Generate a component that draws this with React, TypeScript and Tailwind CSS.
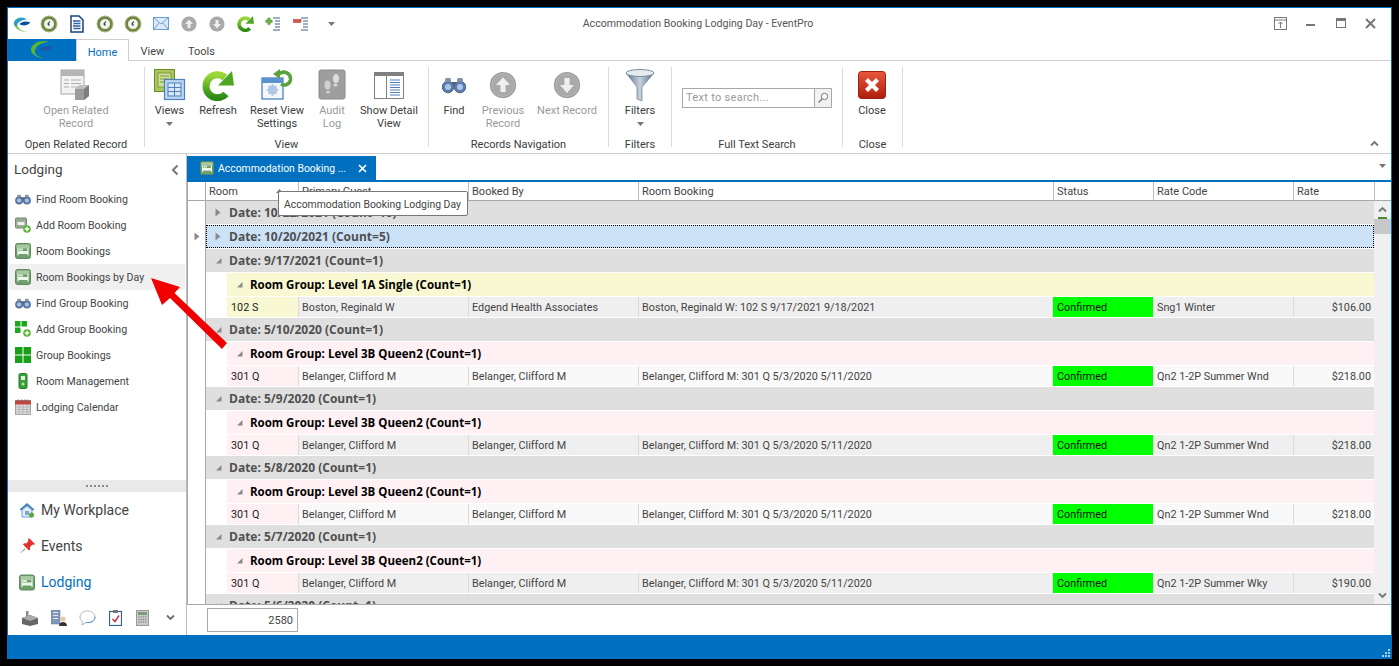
import React from "react";

const Logo = ({ s = 20 }: { s?: number }) => (
  <svg width={s} height={s} viewBox="0 0 20 20">
    <path d="M15 5.500C11 2 4 3 2 8c-1 4 3 7 6 7.500-3-2-3.500-5-1.500-7C9 6.500 12 5.500 15 5.500z" fill="#2f9fc6" />
    <path d="M2.500 11c1 4 7 7.500 13 6.500-4 0-8-1.500-9.500-4.500z" fill="#7cc243" />
    <path d="M7.500 10c2-2.500 6-3.500 11-1.500-3 3-8 4-11 1.500z" fill="#0d4f9e" />
  </svg>
);
const LogoTab = () => (
  <svg width="24" height="20" viewBox="0 0 24 20">
    <path d="M19 2C12-1 2 3 1 9c-.5 5 6 9 13 9.500-6-1.500-10-4-9-8.500C6 5.500 12 2.500 19 2z" fill="#5cb531" />
    <path d="M9 9.500c3-3 9-4 14-2.500-3 4-10 6-14 2.500z" fill="#1a5aa8" />
  </svg>
);
const Clock = () => (
  <svg width="18" height="18" viewBox="0 0 18 18">
    <circle cx="9" cy="9" r="8" fill="#6e8a3a" />
    <circle cx="9" cy="9" r="8" fill="none" stroke="#a9b98a" strokeWidth="1" />
    <circle cx="9" cy="9" r="5.500" fill="#f4f4ee" stroke="#4d6428" strokeWidth="0.7" />
    <path d="M9.800 6.500 8 9l1.500 1.500" fill="none" stroke="#333" strokeWidth="1.200" />
  </svg>
);
const Doc = () => (
  <svg width="16" height="18" viewBox="0 0 16 18">
    <path d="M2 1h8l4 4v12H2z" fill="#fff" stroke="#14437f" strokeWidth="1.500" />
    <path d="M4.500 6h7M4.500 8.500h7M4.500 11h7M4.500 13.500h7" stroke="#2a62ad" strokeWidth="1.300" />
    <path d="M4 6h1.500M4 11h1.500" stroke="#c23a2a" strokeWidth="1.300" />
  </svg>
);
const Mail = () => (
  <svg width="16" height="13" viewBox="0 0 16 13">
    <rect x="0.500" y="0.500" width="15" height="12" fill="#dbe9f8" stroke="#6d9ed3" />
    <path d="M1 1l7 6 7-6M1 12l5-6M15 12l-5-6" fill="none" stroke="#6d9ed3" />
  </svg>
);
const GrayArrow = ({ up, s = 16 }: { up?: boolean; s?: number }) => (
  <svg width={s} height={s} viewBox="0 0 16 16">
    <circle cx="8" cy="8" r="7.500" fill="#9b9b9b" />
    <circle cx="8" cy="8" r="6.500" fill="#a9a9a9" stroke="#bdbdbd" strokeWidth="0.500" />
    <path d={up ? "M8 3.500 12 8H9.500v4h-3V8H4z" : "M8 12.500 12 8H9.500V4h-3v4H4z"} fill="#eee" />
  </svg>
);
const Refresh = ({ s = 32 }: { s?: number }) => (
  <svg width={s} height={s} viewBox="0 0 32 32">
    <defs>
      <linearGradient id="gr" x1="0" y1="0" x2="0" y2="1">
        <stop offset="0" stopColor="#9bd93a" />
        <stop offset="1" stopColor="#2a8a14" />
      </linearGradient>
    </defs>
    <path d="M23 8.500A11.500 11.500 0 1 0 24 25" fill="none" stroke="url(#gr)" strokeWidth="7" />
    <path d="M16 16.500h16L30 2z" fill="#4ea720" />
  </svg>
);
const OutlinePM = ({ plus }: { plus?: boolean }) => (
  <svg width="16" height="16" viewBox="0 0 16 16">
    <path d="M8 2h7M10 5h5M10 8h5M10 11h5M8 14h7" stroke="#3c5f87" strokeWidth="1.200" />
    {plus ? (
      <path d="M1 5h2.500V2.500h3V5H9v3H6.500v2.500h-3V8H1z" fill="#72b23c" stroke="#3c7a1e" strokeWidth="0.500" transform="scale(0.8)" />
    ) : (
      <rect x="0.500" y="3.500" width="7.500" height="3" fill="#d9534f" stroke="#a33" strokeWidth="0.500" />
    )}
  </svg>
);
const OpenRelated = () => (
  <svg width="32" height="32" viewBox="0 0 32 32">
    <rect x="1" y="1" width="23" height="24" fill="#f3f3f3" stroke="#a5a5a5" />
    <rect x="1" y="1" width="23" height="6" fill="#b5b5b5" />
    <path d="M4 11h5M4 14.500h5M4 18h5M11 11h10M11 14.500h10M11 18h10" stroke="#b0b0b0" />
    <path d="M15 20l5-4h9v11l-5 4h-9z" fill="#9b9b9b" />
    <path d="M15 20l5-4h9l-5 4z" fill="#c0c0c0" />
    <path d="M24 20l5-4v11l-5 4z" fill="#7e7e7e" />
  </svg>
);
const Views = () => (
  <svg width="32" height="32" viewBox="0 0 32 32">
    <rect x="0.500" y="0.500" width="20" height="22" fill="#a9c75f" stroke="#6b8a26" />
    <rect x="4" y="4" width="13" height="14" fill="#cfe09e" stroke="#7d9a3a" />
    <path d="M6 7h9M6 10h9M6 13h9" stroke="#7d9a3a" />
    <rect x="10.500" y="10.500" width="20" height="20" fill="#bcd6f2" stroke="#4f81bd" strokeWidth="1.200" />
    <rect x="14" y="14" width="13" height="13" fill="#d8e8f8" stroke="#4f81bd" />
    <path d="M14 18.500h13M14 22.500h13M20.500 14v13" stroke="#4f81bd" />
  </svg>
);
const ResetView = () => (
  <svg width="32" height="32" viewBox="0 0 32 32">
    <rect x="1" y="9" width="21" height="21" fill="#f4f8fd" stroke="#3f78bd" strokeWidth="1.200" />
    <rect x="1" y="9" width="21" height="5" fill="#5a93d2" />
    <circle cx="11.500" cy="21" r="3.500" fill="none" stroke="#aec6e4" strokeWidth="2.500" />
    <path d="M11.500 15v12M5.500 21h12M7.500 17l8 8M15.500 17l-8 8" stroke="#aec6e4" strokeWidth="1.500" />
    <path d="M18 5C23 1 30 4 29.500 10.500 29 15 24 17.500 20 15" fill="none" stroke="#5aa23a" strokeWidth="3.500" />
    <path d="M19 0l-7 5 7 5z" fill="#5aa23a" />
  </svg>
);
const AuditLog = () => (
  <svg width="28" height="32" viewBox="0 0 28 32">
    <rect x="1" y="1" width="26" height="29" rx="2" fill="#9e9e9e" stroke="#8a8a8a" />
    <ellipse cx="18" cy="9.500" rx="3" ry="4.500" fill="#dcdcdc" />
    <ellipse cx="17.500" cy="16" rx="2" ry="1.500" fill="#dcdcdc" />
    <ellipse cx="9.500" cy="16" rx="3" ry="4.500" fill="#d0d0d0" />
    <ellipse cx="10" cy="23" rx="2" ry="1.500" fill="#d0d0d0" />
  </svg>
);
const ShowDetail = () => (
  <svg width="30" height="27" viewBox="0 0 30 27">
    <rect x="0.500" y="0.500" width="29" height="26" fill="#fff" stroke="#808080" />
    <rect x="0" y="0" width="30" height="4" fill="#808080" />
    <path d="M12.500 4v23" stroke="#808080" />
    <path d="M16 8h10M16 10.500h10M16 13h10M16 15.500h10M16 18h10M16 20.500h10M16 23h10" stroke="#4e7fb8" />
  </svg>
);
const Binoc = ({ s = 24 }: { s?: number }) => (
  <svg width={s} height={Math.round(s * 0.7)} viewBox="0 0 24 17">
    <rect x="8" y="5" width="8" height="5" fill="#56606e" />
    <circle cx="6" cy="10" r="5.800" fill="#5a7cb0" stroke="#55657c" />
    <circle cx="18" cy="10" r="5.800" fill="#5a7cb0" stroke="#55657c" />
    <circle cx="6" cy="10" r="3" fill="#a9c6ea" />
    <circle cx="18" cy="10" r="3" fill="#a9c6ea" />
    <rect x="3" y="1" width="6" height="4" rx="1.500" fill="#8292a6" />
    <rect x="15" y="1" width="6" height="4" rx="1.500" fill="#8292a6" />
  </svg>
);
const Funnel = () => (
  <svg width="30" height="32" viewBox="0 0 30 32">
    <defs>
      <linearGradient id="fn" x1="0" y1="0" x2="1" y2="0">
        <stop offset="0" stopColor="#5d7388" />
        <stop offset="0.500" stopColor="#c6d2dc" />
        <stop offset="1" stopColor="#566a7e" />
      </linearGradient>
    </defs>
    <path d="M1 4 12 18v12l5 2V18L29 4z" fill="url(#fn)" stroke="#5c6d7e" strokeWidth="0.600" />
    <ellipse cx="15" cy="4" rx="14" ry="3.500" fill="#e6ebef" stroke="#7d8d9c" />
  </svg>
);
const CloseBig = () => (
  <svg width="28" height="28" viewBox="0 0 28 28">
    <defs>
      <linearGradient id="cl" x1="0" y1="0" x2="0" y2="1">
        <stop offset="0" stopColor="#e8573a" />
        <stop offset="1" stopColor="#b01c0c" />
      </linearGradient>
    </defs>
    <rect x="0.500" y="0.500" width="27" height="27" rx="3" fill="url(#cl)" stroke="#9a2010" />
    <path d="M7 10l3-3 4 4 4-4 3 3-4 4 4 4-3 3-4-4-4 4-3-3 4-4z" fill="#fff" />
  </svg>
);
const Bed = ({ s = 16 }: { s?: number }) => (
  <svg width={s} height={s} viewBox="0 0 16 16">
    <rect x="0.500" y="0.500" width="15" height="15" rx="2" fill="#6ea06c" stroke="#5c8a5c" />
    <rect x="1.500" y="1.500" width="13" height="4" rx="1" fill="#a8c8a4" />
    <path d="M3 5v7.500M13 5v7.500" stroke="#eef5ec" strokeWidth="1.200" />
    <rect x="3" y="8" width="10" height="3" fill="#eef5ec" />
    <rect x="4" y="5.500" width="4" height="2" fill="#d8e8d4" />
  </svg>
);
const AddRoom = () => (
  <svg width="16" height="16" viewBox="0 0 16 16">
    <rect x="0.500" y="1" width="11" height="10" rx="1" fill="#98ac98" stroke="#6f8a70" />
    <rect x="2.500" y="5" width="7" height="3" fill="#eef3ee" />
    <circle cx="12" cy="12" r="3.800" fill="#5bb534" />
    <path d="M12 9.800v4.400M9.800 12h4.400" stroke="#fff" strokeWidth="1.300" />
  </svg>
);
const AddGroup = () => (
  <svg width="16" height="16" viewBox="0 0 16 16">
    <path d="M0 0h5.500v5.500H0zM6.500 0H12v5.500H6.500zM0 6.500h5.500V12H0z" fill="#1ca81c" />
    <circle cx="12" cy="12" r="3.800" fill="#5bb534" />
    <path d="M12 9.800v4.400M9.800 12h4.400" stroke="#fff" strokeWidth="1.300" />
  </svg>
);
const GroupBk = () => (
  <svg width="16" height="16" viewBox="0 0 16 16">
    <path d="M0 0h7.500v7.500H0zM8.500 0H16v7.500H8.500zM0 8.500h7.500V16H0zM8.500 8.500H16V16H8.500z" fill="#18a018" />
  </svg>
);
const RoomMgmt = () => (
  <svg width="16" height="16" viewBox="0 0 16 16">
    <rect x="4" y="0.500" width="8" height="15" rx="1.500" fill="#3aa03a" stroke="#227a22" />
    <rect x="6" y="3" width="4" height="4" fill="#e4f4e0" />
    <circle cx="8" cy="11" r="1.500" fill="#b8e4a8" />
  </svg>
);
const Calendar = () => (
  <svg width="16" height="16" viewBox="0 0 16 16">
    <rect x="0.500" y="1.500" width="15" height="14" fill="#ddd" stroke="#a5a5a5" />
    <rect x="0" y="1.500" width="16" height="4" fill="#c2453c" />
    <path d="M3 0.500v2M6.500 0.500v2M10 0.500v2M13 0.500v2" stroke="#666" />
    <path d="M1 8h14M1 10.500h14M1 13h14M4 6v9M8 6v9M12 6v9" stroke="#aaa" strokeWidth="0.700" />
  </svg>
);
const Home = () => (
  <svg width="16" height="16" viewBox="0 0 16 16">
    <path d="M8 1 .5 7.500l1.500 1L8 3.500l6 5 1.500-1z" fill="#3f7fb8" />
    <path d="M3 8v7h10V8L8 4z" fill="#e4eef8" stroke="#4e86bd" strokeWidth="0.800" />
    <rect x="6" y="9" width="4" height="4" fill="#7aa6d2" />
    <circle cx="12.500" cy="13" r="2.500" fill="#56a838" />
  </svg>
);
const Pin = () => (
  <svg width="16" height="16" viewBox="0 0 16 16">
    <path d="M9 1l6 6-1.500 1-1-.5L10 10c.5 1.500 0 3-1 3.500L3 7.500C3.500 6.500 5 6 6.500 6.500L8.500 3.500 8 2.500z" fill="#e0322a" transform="translate(1 -1)" />
    <path d="M5.500 10.500 1 15l.5 0 5-3.500z" fill="#999" />
  </svg>
);
const Factory = () => (
  <svg width="16" height="16" viewBox="0 0 16 16">
    <path d="M0 8l8-3 8 3v6l-8 2-8-2z" fill="#666" />
    <rect x="4" y="1" width="2.500" height="7" fill="#888" />
    <path d="M0 8l8 3 8-3-8-3z" fill="#aaa" />
  </svg>
);
const BldPerson = () => (
  <svg width="16" height="16" viewBox="0 0 16 16">
    <rect x="0" y="0" width="9" height="14" fill="#8097b8" stroke="#5d7598" strokeWidth="0.500" />
    <path d="M2 2.500h5M2 5.500h5M2 8.500h5" stroke="#dfe7f1" />
    <circle cx="12" cy="9" r="2.500" fill="#e8c89e" />
    <path d="M8 16c0-3 2-4 4-4s4 1 4 4z" fill="#333" />
  </svg>
);
const Bubble = () => (
  <svg width="17" height="16" viewBox="0 0 17 16">
    <path d="M8.500 1C4 1 1 3.500 1 7c0 2 1 3.500 2.500 4.500L3 15l4-2.500c4 .5 9-1 9-5.500C16 3.500 13 1 8.500 1z" fill="#fff" stroke="#aab7c4" />
    <path d="M7 12.500c4 .5 9-1 9-5.500" fill="none" stroke="#4e94d2" />
  </svg>
);
const Clipboard = () => (
  <svg width="13" height="16" viewBox="0 0 13 16">
    <rect x="0.500" y="1.500" width="12" height="14" fill="#fff" stroke="#31618f" strokeWidth="1.200" />
    <rect x="4" y="0" width="5" height="3" fill="#777" />
    <path d="M3.500 9l2.500 2.500 4-6" fill="none" stroke="#c8323c" strokeWidth="1.500" />
  </svg>
);
const Calc = () => (
  <svg width="13" height="16" viewBox="0 0 13 16">
    <rect x="0.500" y="0.500" width="12" height="15" fill="#c9c9c9" stroke="#9a9a9a" />
    <rect x="2" y="2" width="9" height="3" fill="#78a078" />
    <path d="M2.500 7h8M2.500 9.500h8M2.500 12h8" stroke="#777" strokeWidth="1.200" strokeDasharray="1.200 1" />
  </svg>
);
const Chev = ({ up, c = "#6f6f6f" }: { up?: boolean; c?: string }) => (
  <svg width="9" height="7" viewBox="0 0 9 7">
    <path d={up ? "M1 5.500 4.500 2 8 5.500" : "M1 1.500 4.500 5 8 1.500"} fill="none" stroke={c} strokeWidth="1.800" />
  </svg>
);
const Tri = ({ open }: { open?: boolean }) =>
  open ? (
    <svg width="7" height="7" viewBox="0 0 7 7"><path d="M6.500 1v5.500H1z" fill="#8a8a8a" /></svg>
  ) : (
    <svg width="6" height="9" viewBox="0 0 6 9"><path d="M.5.500 5.500 4.500.5 8.500z" fill="#8a8a8a" /></svg>
  );
const DropTri = ({ c = "#777" }: { c?: string }) => (
  <svg width="7" height="4" viewBox="0 0 7 4"><path d="M0 0h7L3.500 4z" fill={c} /></svg>
);

const QAT: React.ReactNode[] = [
  <Clock />, <Doc />, <Clock />, <Clock />, <Mail />, <GrayArrow up />, <GrayArrow />, <Refresh s={17} />, <OutlinePM plus />, <OutlinePM />,
];

const RibbonBtn = ({ w, icon, lines, off, drop }: { w: string; icon: React.ReactNode; lines: string[]; off?: boolean; drop?: boolean }) => (
  <div className={`${w} flex flex-col items-center shrink-0`}>
    <div className="h-[36px] mb-px flex items-center justify-center">{icon}</div>
    <div className={`text-center leading-[13px] ${off ? "text-[#9a9a9a]" : "text-[#3c3c3c]"}`}>
      {lines.map((l) => (
        <div key={l} className="whitespace-nowrap">{l}</div>
      ))}
      {drop && <div className="flex justify-center h-[13px] items-center"><DropTri /></div>}
    </div>
  </div>
);

const Group = ({ w, label, children }: { w: string; label: string; children: React.ReactNode }) => (
  <div className={`${w} shrink-0 relative flex flex-col h-[80px] mt-[6px] border-r border-[#dcdcdc]`}>
    <div className="flex-1 flex items-start min-h-0">{children}</div>
    <div className="text-center leading-[13px] text-[#3c3c3c] h-[13px] mb-[-4px]">{label}</div>
  </div>
);

const NAV: [React.ReactNode, string, boolean?][] = [
  [<Binoc s={16} />, "Find Room Booking"],
  [<AddRoom />, "Add Room Booking"],
  [<Bed />, "Room Bookings"],
  [<Bed />, "Room Bookings by Day", true],
  [<Binoc s={16} />, "Find Group Booking"],
  [<AddGroup />, "Add Group Booking"],
  [<GroupBk />, "Group Bookings"],
  [<RoomMgmt />, "Room Management"],
  [<Calendar />, "Lodging Calendar"],
];

const COLS: [string, string][] = [
  ["w-[93px]", "Room"],
  ["w-[170px]", "Primary Guest"],
  ["w-[170px]", "Booked By"],
  ["w-[415px]", "Room Booking"],
  ["w-[100px]", "Status"],
  ["w-[140px]", "Rate Code"],
  ["w-[81px]", "Rate"],
];

type Day = { date: string; group: string; tint: string; room: string; guest: string; by: string; booking: string; code: string; rate: string; bg: string };
const bel = "Belanger, Clifford M";
const belB = "Belanger, Clifford M: 301 Q 5/3/2020 5/11/2020";
const DAYS: Day[] = [
  { date: "9/17/2021", group: "Level 1A Single", tint: "bg-[#f8f8d2]", room: "102 S", guest: "Boston, Reginald W", by: "Edgend Health Associates", booking: "Boston, Reginald W: 102 S 9/17/2021 9/18/2021", code: "Sng1 Winter", rate: "$106.00", bg: "bg-[#efefef]" },
  { date: "5/10/2020", group: "Level 3B Queen2", tint: "bg-[#fff0f4]", room: "301 Q", guest: bel, by: bel, booking: belB, code: "Qn2 1-2P Summer Wnd", rate: "$218.00", bg: "bg-[#f9f9f9]" },
  { date: "5/9/2020", group: "Level 3B Queen2", tint: "bg-[#fff0f4]", room: "301 Q", guest: bel, by: bel, booking: belB, code: "Qn2 1-2P Summer Wnd", rate: "$218.00", bg: "bg-[#efefef]" },
  { date: "5/8/2020", group: "Level 3B Queen2", tint: "bg-[#fff0f4]", room: "301 Q", guest: bel, by: bel, booking: belB, code: "Qn2 1-2P Summer Wnd", rate: "$218.00", bg: "bg-[#f9f9f9]" },
  { date: "5/7/2020", group: "Level 3B Queen2", tint: "bg-[#fff0f4]", room: "301 Q", guest: bel, by: bel, booking: belB, code: "Qn2 1-2P Summer Wky", rate: "$190.00", bg: "bg-[#efefef]" },
];

const DateRow = ({ label, open, sel }: { label: string; open?: boolean; sel?: boolean }) => (
  <div className={`h-[23px] mb-px flex items-center shrink-0 ${sel ? "bg-[#cce3f7] border border-dotted border-black pl-[8px]" : "bg-[#dfdfdf] pl-[9px]"}`}>
    <span className="w-[14px] flex items-center"><Tri open={open} /></span>
    <span className="font-['Open_Sans',sans-serif] font-bold text-[12px] text-[#505050]">{label}</span>
  </div>
);

export default function App() {
  return (
    <div className="relative w-[1399px] h-[666px] bg-black pt-[7px] pl-[7px] overflow-hidden font-['Roboto',sans-serif] text-[11px] text-[#3c3c3c]">
      <div className="w-[1385px] h-[652px] border border-[#0070c0] bg-white flex flex-col">
        {/* Title bar */}
        <div className="h-[31px] shrink-0 grid grid-cols-[1fr_auto_1fr] items-center">
          <div className="flex items-center">
            <span className="w-[27px] flex justify-center"><Logo /></span>
            {QAT.map((q, i) => (
              <span key={i} className="w-[28px] flex justify-center">{q}</span>
            ))}
            <span className="w-[32px] flex justify-center"><DropTri /></span>
          </div>
          <div className="text-[#555] text-[10.6px] pr-[3px] pt-px">Accommodation Booking Lodging Day - EventPro</div>
          <div className="flex justify-end items-center pr-[14px] gap-[17px]">
            <svg width="13" height="13" viewBox="0 0 13 13"><rect x="0.500" y="0.500" width="12" height="12" fill="none" stroke="#777" /><path d="M0 3h13M6.500 11V5M4.500 7l2-2 2 2" fill="none" stroke="#777" /></svg>
            <svg width="13" height="13" viewBox="0 0 13 13"><rect x="2" y="7" width="9" height="2" fill="#777" /></svg>
            <svg width="13" height="13" viewBox="0 0 13 13"><rect x="2.500" y="1.500" width="9" height="9" fill="none" stroke="#777" /><rect x="2" y="1" width="10" height="3" fill="#777" /></svg>
            <svg width="13" height="13" viewBox="0 0 13 13"><path d="M2 2l9 9M11 2l-9 9" stroke="#777" strokeWidth="2" /></svg>
          </div>
        </div>
        {/* Tabs */}
        <div className="h-[22px] shrink-0 flex border-b border-[#cfcfcf]">
          <div className="w-[68px] h-[22px] bg-[#0070c0] flex items-center justify-center"><LogoTab /></div>
          <div className="w-[53px] h-[22px] pt-[5px] bg-white border border-b-0 border-[#cfcfcf] text-[#0070c0] flex items-center justify-center">Home</div>
          <div className="w-[47px] pt-[5px] flex items-center justify-center text-[#444]">View</div>
          <div className="w-[51px] pt-[5px] flex items-center justify-center text-[#444]">Tools</div>
        </div>
        {/* Ribbon */}
        <div className="h-[93px] shrink-0 flex border-b border-[#cfcfcf] relative">
          <Group w="w-[137px]" label="Open Related Record">
            <RibbonBtn w="w-[136px]" icon={<OpenRelated />} lines={["Open Related", "Record"]} off />
          </Group>
          <Group w="w-[284px]" label="View">
            <RibbonBtn w="w-[49px]" icon={<Views />} lines={["Views"]} drop />
            <RibbonBtn w="w-[48px]" icon={<Refresh />} lines={["Refresh"]} />
            <RibbonBtn w="w-[70px]" icon={<ResetView />} lines={["Reset View", "Settings"]} />
            <RibbonBtn w="w-[40px]" icon={<AuditLog />} lines={["Audit", "Log"]} off />
            <RibbonBtn w="w-[74px]" icon={<ShowDetail />} lines={["Show Detail", "View"]} />
          </Group>
          <Group w="w-[180px]" label="Records Navigation">
            <RibbonBtn w="w-[50px]" icon={<Binoc />} lines={["Find"]} />
            <RibbonBtn w="w-[48px]" icon={<GrayArrow up s={28} />} lines={["Previous", "Record"]} off />
            <RibbonBtn w="w-[80px]" icon={<GrayArrow s={28} />} lines={["Next Record"]} off />
          </Group>
          <Group w="w-[63px]" label="Filters">
            <RibbonBtn w="w-[62px]" icon={<Funnel />} lines={["Filters"]} drop />
          </Group>
          <Group w="w-[171px]" label="Full Text Search">
            <div className="w-full pt-[21px] pl-[10px] pr-[10px]">
              <div className="h-[20px] w-[150px] border border-[#a8a8a8] flex items-center">
                <span className="flex-1 pl-[3px] pt-px text-[#9a9a9a] tracking-[0.3px]">Text to search...</span>
                <span className="w-[17px] h-[18px] bg-[#f2f2f2] border-l border-[#a8a8a8] flex items-center justify-center">
                  <svg width="12" height="12" viewBox="0 0 12 12"><circle cx="7.500" cy="4.500" r="3.200" fill="#fff" stroke="#777" /><path d="M5 7 1.500 10.500" stroke="#777" strokeWidth="1.500" /></svg>
                </span>
              </div>
            </div>
          </Group>
          <Group w="w-[60px]" label="Close">
            <RibbonBtn w="w-[58px]" icon={<CloseBig />} lines={["Close"]} />
          </Group>
          <div className="flex-1 flex items-end justify-end pr-[12px] pb-[6px]"><Chev up c="#777" /></div>
        </div>
        {/* Body */}
        <div className="flex-1 min-h-0 flex">
          {/* Sidebar */}
          <div className="w-[179px] shrink-0 border-r border-[#bdbdbd] flex flex-col">
            <div className="h-[32px] shrink-0 flex items-center justify-between pl-[6px] pr-[7px]">
              <span className="text-[13.5px] text-[#444] mb-px">Lodging</span>
              <svg width="8" height="12" viewBox="0 0 8 12"><path d="M6.500 1.500 2 6l4.500 4.500" fill="none" stroke="#777" strokeWidth="2" /></svg>
            </div>
            <div className="flex-1 min-h-0">
              {NAV.map(([ic, t, hi]) => (
                <div key={t} className={`h-[26px] flex items-center ${hi ? "bg-[#f0f0f0]" : ""} pl-[6px] mr-[1px] ml-px`}>
                  <span className="w-[16px] flex justify-center mr-[5px]">{ic}</span>
                  <span className="text-[#444] text-[10.6px] pt-px">{t}</span>
                </div>
              ))}
            </div>
            <div className="h-[12px] shrink-0 bg-[#e9e9e9] flex items-center justify-center">
              <svg width="22" height="2" viewBox="0 0 22 2"><path d="M0 1h22" stroke="#8a8a8a" strokeWidth="2" strokeDasharray="2 2" /></svg>
            </div>
            {[[<Home />, "My Workplace", false], [<Pin />, "Events", false], [<Bed s={17} />, "Lodging", true]].map(([ic, t, on], i) => (
              <div key={i} className="h-[36px] shrink-0 flex items-center pl-[11px]">
                <span className="w-[16px] mr-[6px] flex justify-center">{ic as React.ReactNode}</span>
                <span className={`text-[14px] ${on ? "text-[#0070c0]" : "text-[#444]"}`}>{t as string}</span>
              </div>
            ))}
            <div className="h-[35px] shrink-0 flex items-center pl-[14px]">
              <span className="w-[16px] mr-[13px] flex justify-center"><Factory /></span>
              <span className="w-[16px] mr-[12px] flex justify-center"><BldPerson /></span>
              <span className="w-[17px] mr-[11px] flex justify-center"><Bubble /></span>
              <span className="w-[16px] mr-[11px] flex justify-center"><Clipboard /></span>
              <span className="w-[16px] mr-[12px] flex justify-center"><Calc /></span>
              <span className="w-[16px] flex justify-center"><Chev /></span>
            </div>
          </div>
          {/* Main */}
          <div className="flex-1 min-w-0 flex flex-col">
            <div className="h-[26px] shrink-0 flex items-end justify-between">
              <div className="w-[189px] h-[24px] bg-[#0070c0] text-white flex items-center pl-[13px]">
                <span className="mr-[4px]"><Bed s={14} /></span>
                <span className="flex-1 text-[10.4px] pt-px">Accommodation Booking ...</span>
                <svg className="mr-[9px]" width="9" height="9" viewBox="0 0 9 9"><path d="M1 1l7 7M8 1 1 8" stroke="#fff" strokeWidth="1.700" /></svg>
              </div>
              <div className="pr-[5px] pb-[12px]"><DropTri c="#777" /></div>
            </div>
            <div className="h-[2px] shrink-0 bg-[#0070c0]" />
            {/* Header */}
            <div className="h-[19px] shrink-0 flex border-b border-[#a8a8a8] border-l text-[#444]">
              <div className="w-[18px] border-r border-[#a8a8a8]" />
              {COLS.map(([w, t], i) => (
                <div key={t} className={`${w} shrink-0 pl-[3px] pt-px border-r border-[#bdbdbd] flex items-center justify-between pr-[15px] leading-[16px]`}>
                  <span>{t}</span>
                  {i === 0 && <svg className="mb-[1px]" width="7" height="4" viewBox="0 0 7 4"><path d="M3.500 0 7 4H0z" fill="#777" /></svg>}
                </div>
              ))}
            </div>
            {/* Grid */}
            <div className="flex-1 min-h-0 flex border-l border-[#a8a8a8]">
              <div className="w-[18px] shrink-0 border-r border-[#a8a8a8] flex flex-col items-center pt-[31px]"><Tri /></div>
              <div className="w-[1168px] shrink-0 overflow-hidden flex flex-col">
                <DateRow label="Date: 10/22/2021 (Count=10)" />
                <DateRow label="Date: 10/20/2021 (Count=5)" sel />
                {DAYS.map((d) => (
                  <React.Fragment key={d.date}>
                    <DateRow label={`Date: ${d.date} (Count=1)`} open />
                    <div className={`h-[23px] mb-px ml-[21px] shrink-0 flex items-center pl-[9px] ${d.tint}`}>
                      <span className="w-[14px] flex items-center"><Tri open /></span>
                      <span className="font-['Open_Sans',sans-serif] font-bold text-[11.5px] text-black">{`Room Group: ${d.group} (Count=1)`}</span>
                    </div>
                    <div className={`h-[20px] mb-px ml-[21px] shrink-0 flex ${d.bg} text-[#444] text-[10.8px] leading-[22px]`}>
                      <div className={`w-[72px] pl-[4px] ${d.tint} text-[#222] border-r border-[#dadada]`}>{d.room}</div>
                      <div className="w-[170px] pl-[3px] border-r border-[#dadada]">{d.guest}</div>
                      <div className="w-[170px] pl-[3px] border-r border-[#dadada]">{d.by}</div>
                      <div className="w-[414px] pl-[3px] border-r border-[#dadada]">{d.booking}</div>
                      <div className="w-[100px] pl-[4px] bg-[#00ff00] text-[#111]">Confirmed</div>
                      <div className="w-[141px] pl-[4px] border-r border-[#dadada]">{d.code}</div>
                      <div className="w-[80px] pr-[3px] text-right">{d.rate}</div>
                    </div>
                  </React.Fragment>
                ))}
                <DateRow label="Date: 5/6/2020 (Count=1)" open />
              </div>
              <div className="flex-1 bg-[#f0f0f0] flex flex-col items-center pt-[5px] pb-[5px]">
                <Chev up c="#777" />
                <div className="mt-[4px] h-[2px] w-[9px] bg-[#4a8a30]" />
                <div className="h-[15px] w-full bg-[#c8c8c8]" />
                <div className="flex-1" />
                <Chev c="#777" />
              </div>
            </div>
            {/* Footer */}
            <div className="h-[31px] shrink-0 border-t border-[#a8a8a8] flex items-center pl-[20px]">
              <div className="w-[91px] h-[24px] border border-[#a8a8a8] text-right pr-[4px] leading-[24px] text-[#444]">2580</div>
            </div>
          </div>
        </div>
        {/* Status bar */}
        <div className="h-[23px] shrink-0 bg-[#0070c0] flex items-end justify-end pr-px pb-px">
          <svg width="9" height="9" viewBox="0 0 9 9"><path d="M7 1h2v2H7zM4 4h2v2H4zM7 4h2v2H7zM1 7h2v2H1zM4 7h2v2H4zM7 7h2v2H7z" fill="#a9cde9" /></svg>
        </div>
      </div>
      {/* Tooltip */}
      <div className="absolute left-[278px] top-[191px] w-[190px] h-[25px] bg-white border border-[#777] rounded-[2px] flex items-center pl-[5px] pt-[2px] text-[10.4px] text-[#444] whitespace-nowrap">
        Accommodation Booking Lodging Day
      </div>
      {/* Annotation arrow */}
      <svg className="absolute left-[140px] top-[270px]" width="100" height="90" viewBox="140 270 100 90">
        <path d="M151 278 180 287 174.500 293 227 343 222 349 170 298 162 305z" fill="#f00000" />
      </svg>
    </div>
  );
}
